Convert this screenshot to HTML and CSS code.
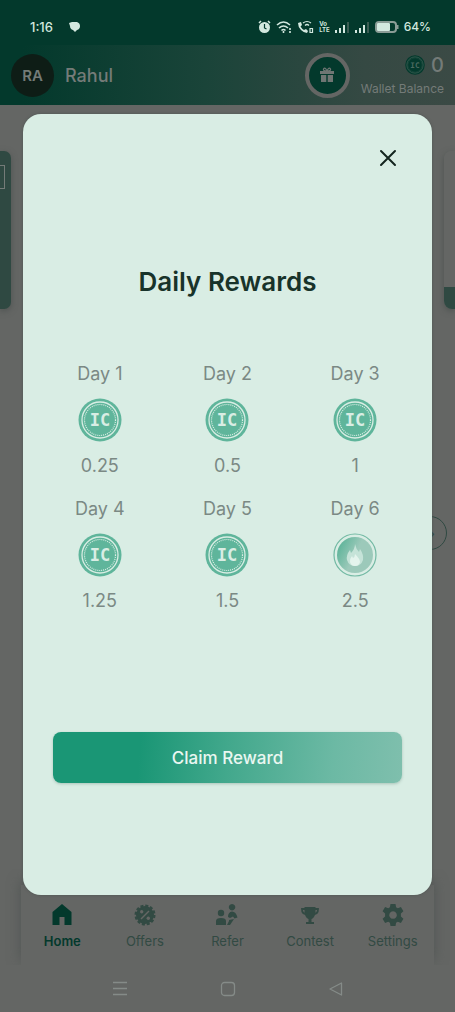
FILE: index.html
```html
<!DOCTYPE html>
<html lang="en">
<head>
<meta charset="utf-8">
<meta name="viewport" content="width=device-width, initial-scale=1">
<title>Daily Rewards</title>
<link rel="stylesheet" href="styles.css">
</head>
<body>
<svg class="defs" aria-hidden="true">
  <defs>
    <linearGradient id="fade" x2="1" y2=".5"><stop offset=".1" stop-color="#5bb398"/><stop offset=".6" stop-color="#9cc9ba"/></linearGradient>
    <symbol id="coin" viewBox="0 0 44 44">
      <circle cx="22" cy="22" r="21.5" fill="currentColor"/>
      <circle cx="22" cy="22" r="18" fill="none" stroke="var(--coin-ink)" stroke-width="1.3"/>
      <circle cx="22" cy="22" r="15.5" fill="none" stroke="var(--coin-ink)" stroke-width="1.2" stroke-dasharray="1 1"/>
      <text x="22" y="28" text-anchor="middle" class="coin-text" fill="var(--coin-ink)">IC</text>
    </symbol>
  </defs>
</svg>
<div class="app">
  <div class="status">
    <span>1:16</span>
    <svg class="bubble" width="12" height="12" viewBox="0 0 12 12"><path d="M3 1h5q3 1 3 4 0 3-3 4l-2 2-2-2Q1 8 1 5L0 2z" fill="currentColor"/></svg>
    <div class="status-icons">
      <svg width="13" height="14" viewBox="0 0 13 14"><circle cx="6.5" cy="7.5" r="5.5" fill="currentColor"/><path d="M1 3l2-2M12 3l-2-2" stroke="currentColor" stroke-width="1.5"/><path d="M6.500 4v4l2 1" fill="none" stroke="#03392c" stroke-width="1.2"/></svg>
      <svg width="16" height="14" viewBox="0 0 16 14" fill="none" stroke="currentColor" stroke-width="1.600"><path d="M1 5q6.500-6 13 0M3 8q4.500-4 9 0M5.500 10.500q2-2 4 0"/><path d="M7.500 11v2M14 8v2M14 11v2"/></svg>
      <svg width="17" height="14" viewBox="0 0 17 14"><path d="M1 3l3-1 1 3-1.500 1.500Q5 9 7 10l2-1 2 2-1 2Q7 13 4 10 1 7 1 3z" fill="currentColor"/><path d="M6 3q4-3 8 0M8 5.500q2-2 4 0M13 8.500h2.500v4H13z" fill="none" stroke="currentColor" stroke-width="1.200"/></svg>
      <span class="volte">Vo<br>LTE</span>
      <svg width="15" height="12" viewBox="0 0 15 12"><path d="M0 9h2v3H0zM4 7h2v5H4zM8 4h2v8H8z" fill="currentColor"/><path d="M12 1h2v11h-2z" fill="#3c5d53"/></svg>
      <svg width="15" height="12" viewBox="0 0 15 12"><path d="M0 9h2v3H0zM4 7h2v5H4zM8 4h2v8H8z" fill="currentColor"/><path d="M12 1h2v11h-2z" fill="#3c5d53"/></svg>
      <svg class="battery" width="24" height="12" viewBox="0 0 24 12"><rect x="1" y="1" width="20" height="10" rx="3" fill="none" stroke="#8b9c96" stroke-width="2"/><path d="M22 4h1.500v4H22z" fill="#8b9c96"/><rect x="2" y="2" width="13" height="8" rx="1" fill="currentColor"/></svg>
      <span class="percent">64%</span>
    </div>
  </div>
  <header class="header">
    <span class="avatar">RA</span>
    <span class="name">Rahul</span>
    <button class="gift" aria-label="Gifts"><svg width="14" height="16" viewBox="0 0 14 16"><path d="M0 4h14v3H0zM1 8h5.300v7H1zM7.700 8H13v7H7.700z" fill="currentColor"/><path d="M7 4Q3 4 3.500 2 5-.5 7 4q2-4.500 3.500-2Q11 4 7 4z" fill="none" stroke="currentColor" stroke-width="1.200"/></svg></button>
    <div class="wallet">
      <div class="amount"><svg class="coin-small" width="20" height="20"><use href="#coin"/></svg><span>0</span></div>
      <span class="wallet-label">Wallet Balance</span>
    </div>
  </header>
  <main class="content">
    <div class="carousel">
      <div class="slide slide-prev"><span class="slide-frame"></span></div>
      <div class="slide slide-current"></div>
      <div class="slide slide-next"></div>
    </div>
    <button class="more" aria-label="Next">›</button>
  </main>
  <nav class="tabs">
    <a class="tab active" href="#home"><svg width="24" height="24" viewBox="0 0 24 24"><path d="M12 1l9.500 8v13h-7v-8h-5v8h-7V9z" fill="currentColor"/></svg>Home</a>
    <a class="tab" href="#offers"><svg width="24" height="24" viewBox="0 0 24 24"><circle cx="12" cy="12" r="9" fill="currentColor"/><circle cx="12" cy="12" r="9" fill="none" stroke="currentColor" stroke-width="3" stroke-dasharray="2.900 1.812"/><path d="M16 8l-8 8" stroke="#646664" stroke-width="1.500"/><circle cx="8.700" cy="8.700" r="1.700" fill="#646664"/><circle cx="15.300" cy="15.300" r="1.700" fill="#646664"/></svg>Offers</a>
    <a class="tab" href="#refer"><svg width="24" height="24" viewBox="0 0 24 24" fill="currentColor"><circle cx="6" cy="10" r="3.200"/><path d="M1 22v-4q0-3 5-3t5 3v4zM17 7.400a3.200 3.200 0 1 1 .1 0zM13 14q0-5 4-5.500 4 0 5.500 6l-3 1-1.500-2-3 1.500zM14 17l5-1-4 6h-3l2-4z"/></svg>Refer</a>
    <a class="tab" href="#contest"><svg width="24" height="24" viewBox="0 0 24 24"><path d="M6.500 4h11v6q-1 5-4 6v3H16v2H8v-2h2.500v-3q-3-1-4-6z" fill="currentColor"/><path d="M7 6H4q0 5 4 5M17 6h3q0 5-4 5" fill="none" stroke="currentColor" stroke-width="1.800"/></svg>Contest</a>
    <a class="tab" href="#settings"><svg width="24" height="24" viewBox="0 0 24 24"><path fill-rule="evenodd" d="M9.500 1h5l.6 3.200 1.700 1 3.100-1.200 2.500 4.300-2.500 2.200v3l2.500 2.200-2.500 4.300-3.100-1.200-1.700 1-.6 3.200h-5l-.6-3.200-1.700-1L4.100 20l-2.500-4.300 2.500-2.200v-3L1.600 8.300 4.100 4l3.100 1.200 1.700-1zM12 8.200a3.800 3.800 0 1 0 .1 0z" fill="currentColor"/></svg>Settings</a>
  </nav>
  <div class="system">
    <svg width="16" height="16" viewBox="0 0 16 16"><path d="M1 1.500h14M1 7.500h14M1 13.500h14" stroke="currentColor" stroke-width="1.300"/></svg>
    <svg width="16" height="16" viewBox="0 0 16 16"><rect x="1.500" y="1.500" width="13" height="13" rx="3" fill="none" stroke="currentColor" stroke-width="1.300"/></svg>
    <svg width="16" height="16" viewBox="0 0 16 16"><path d="M13.500 2v12L2 8z" fill="none" stroke="currentColor" stroke-width="1.300" stroke-linejoin="round"/></svg>
  </div>
</div>
<div class="overlay">
  <section class="modal" role="dialog" aria-labelledby="title">
    <button class="close" aria-label="Close"><svg width="18" height="18" viewBox="0 0 18 18"><path d="M2 2l14 14M16 2L2 16" stroke="currentColor" stroke-width="2" stroke-linecap="round"/></svg></button>
    <h1 class="title" id="title">Daily Rewards</h1>
    <div class="days">
      <div class="day"><span>Day 1</span><svg class="coin"><use href="#coin"/></svg><span>0.25</span></div>
      <div class="day"><span>Day 2</span><svg class="coin"><use href="#coin"/></svg><span>0.5</span></div>
      <div class="day"><span>Day 3</span><svg class="coin"><use href="#coin"/></svg><span>1</span></div>
      <div class="day"><span>Day 4</span><svg class="coin"><use href="#coin"/></svg><span>1.25</span></div>
      <div class="day"><span>Day 5</span><svg class="coin"><use href="#coin"/></svg><span>1.5</span></div>
      <div class="day"><span>Day 6</span><svg class="coin" viewBox="0 0 44 44"><circle cx="22" cy="22" r="21" fill="#d9ede4" stroke="#72b9a3" stroke-width="1.200"/><circle cx="22" cy="22" r="18" fill="url(#fade)"/><path d="M22 11q1 5 4 8l1-3q4 6 3 11-2 6-8 6t-8-6q-1-5 3-10l1 3q4-4 4-9z" fill="#c5e3d8"/><path d="M22 21q5 5 5 8-1 4-5 4t-5-4q0-4 2-6l1 2q2-1 2-4z" fill="#e4f4ed"/></svg><span>2.5</span></div>
    </div>
    <button class="claim">Claim Reward</button>
  </section>
</div>
</body>
</html>
```
FILE: styles.css
```css
* { box-sizing: border-box; }
body {
  margin: 0;
  font-family: Inter, "Liberation Sans", sans-serif;
  background: #646664;
  color: #7b8984;
}
button { border: 0; padding: 0; font: inherit; cursor: pointer; }
.defs { position: absolute; width: 0; height: 0; }
.app { min-height: 100vh; display: flex; flex-direction: column; overflow: hidden; }

.status {
  display: flex;
  align-items: center;
  gap: 16px;
  height: 45px;
  padding: 8px 24px 0 30px;
  background: #03392c;
  color: #d3e8df;
  font-size: 13px;
  font-weight: 500;
}
.status-icons { display: flex; align-items: center; gap: 5px; margin-left: auto; }
.percent { font-size: 12px; }
.volte { font-size: 6px; line-height: 6px; font-weight: 700; }

.header {
  display: flex;
  align-items: center;
  height: 60px;
  padding: 0 11px;
  background: linear-gradient(90deg, #03392c 5%, #1a4439 45%, #354943 80%, #3b4a45);
  color: #747b78;
}
.avatar {
  display: grid;
  place-items: center;
  width: 43px;
  height: 43px;
  border-radius: 50%;
  background: #0e1d16;
  font-size: 15px;
  font-weight: 600;
}
.name { margin-left: 11px; font-size: 18px; font-weight: 500; }
.gift {
  display: grid;
  place-items: center;
  width: 45px;
  height: 45px;
  margin-left: auto;
  border: 4px solid #646664;
  border-radius: 50%;
  background: #03392c;
  color: #6f7673;
}
.wallet { display: flex; flex-direction: column; align-items: flex-end; gap: 4px; margin-left: 11px; }
.amount { display: flex; align-items: center; gap: 6px; font-size: 20px; line-height: 24px; font-weight: 500; }
.wallet-label { font-size: 12px; line-height: 16px; }
.coin-small { color: #03392c; --coin-ink: #4b6a60; }

.content { flex: 1; }
.carousel { display: flex; gap: 12px; padding-top: 46px; }
.slide { height: 158px; }
.slide-prev { width: 11px; padding-top: 14px; border-radius: 0 7px 7px 0; background: #2f4942; box-shadow: 0 2px 6px #4e5351; }
.slide-frame { display: block; width: 5px; height: 24px; border: 1px solid #747b78; border-left: 0; }
.slide-current { flex: 1; }
.slide-next {
  width: 11px;
  border-radius: 8px 0 0 8px;
  background: linear-gradient(#646664 136px, #2f4942 136px);
  box-shadow: 0 2px 6px #4e5351;
}
.more {
  display: block;
  width: 34px;
  height: 34px;
  margin: 207px 8px 0 auto;
  border: 1px solid #2f4942;
  border-radius: 50%;
  background: transparent;
  color: #2f4942;
  text-align: right;
  padding-right: 11px;
}

.tabs {
  display: grid;
  grid-template-columns: repeat(5, 1fr);
  height: 80px;
  margin: 0 21px;
  padding-top: 18px;
  box-shadow: 0 -4px 12px #505553;
  clip-path: inset(-16px -16px 0);
}
.tab {
  display: flex;
  flex-direction: column;
  align-items: center;
  gap: 6px;
  color: #324a43;
  font-size: 13px;
  line-height: 16px;
  text-decoration: none;
}
.active { color: #03392c; font-weight: 600; }
.system {
  display: flex;
  justify-content: center;
  gap: 92px;
  height: 47px;
  padding-top: 16px;
  color: #858b88;
}

.overlay { position: absolute; inset: 0; display: flex; padding: 114px 23px 117px; }
.modal {
  flex: 1;
  display: flex;
  flex-direction: column;
  border-radius: 18px;
  background: #d9ede4;
  box-shadow: 0 0 3px #4e5552;
}
.close {
  display: grid;
  place-items: center;
  align-self: flex-end;
  width: 40px;
  height: 40px;
  margin: 24px 24px 0 0;
  background: transparent;
  color: #14251f;
}
.title {
  margin: 86px 0 0;
  color: #18332a;
  font-size: 26px;
  line-height: 36px;
  font-weight: 600;
  text-align: center;
}
.days { display: grid; grid-template-columns: repeat(3, 1fr); row-gap: 19px; margin-top: 62px; padding: 0 13px; }
.day { display: flex; flex-direction: column; align-items: center; gap: 12px; font-size: 18px; line-height: 24px; }
.coin { width: 44px; height: 44px; color: #5fb59b; --coin-ink: #d9ede4; }
.coin-text { font: bold 17px "DejaVu Sans Mono", monospace; }
.claim {
  height: 51px;
  margin: auto 30px 112px;
  border-radius: 8px;
  background: linear-gradient(95deg, #1a9675 25%, #42a88c 50%, #6cb9a4 80%, #7fbfad);
  box-shadow: 0 1px 3px #a9c4b9;
  color: #eaf7f1;
  font-size: 17px;
  font-weight: 500;
}
```
